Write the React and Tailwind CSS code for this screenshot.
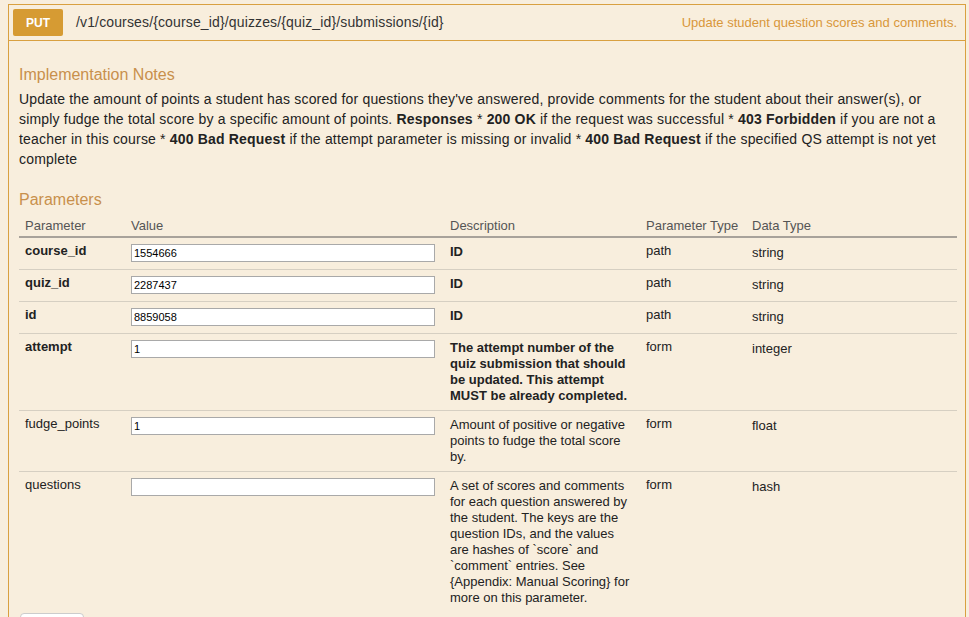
import React from 'react'

const rows = [
  { name: 'course_id', value: '1554666', desc: 'ID', bold: true, descBold: true, type: 'path', dtype: 'string' },
  { name: 'quiz_id', value: '2287437', desc: 'ID', bold: true, descBold: true, type: 'path', dtype: 'string' },
  { name: 'id', value: '8859058', desc: 'ID', bold: true, descBold: true, type: 'path', dtype: 'string' },
  { name: 'attempt', value: '1', desc: 'The attempt number of the quiz submission that should be updated. This attempt MUST be already completed.', bold: true, descBold: true, type: 'form', dtype: 'integer' },
  { name: 'fudge_points', value: '1', desc: 'Amount of positive or negative points to fudge the total score by.', type: 'form', dtype: 'float' },
  { name: 'questions', value: '', desc: 'A set of scores and comments for each question answered by the student. The keys are the question IDs, and the values are hashes of `score` and `comment` entries. See {Appendix: Manual Scoring} for more on this parameter.', type: 'form', dtype: 'hash' },
]

export default function App(){
  return (
    <div className="min-h-[617px] bg-[#f8eedd] pt-[4px] pl-[8px] pr-[3px] text-[#222]" style={{ fontFamily: '"Liberation Sans", Arial, sans-serif' }}>
      <div className="border border-[#d9a040]">
        {/* heading */}
        <div className="flex items-center h-[36px] pl-[4px] pr-[8px] border-b border-[#d9a040]">
          <span className="w-[50px] h-[27px] rounded-[2px] bg-[#d69b33] text-white text-[12px] font-bold flex items-center justify-center">PUT</span>
          <span className="ml-[13px] text-[14px] tracking-[0.14px] text-[#333]">/v1/courses/&#123;course_id&#125;/quizzes/&#123;quiz_id&#125;/submissions/&#123;id&#125;</span>
          <span className="ml-auto text-[13px] text-[#d9973a]">Update student question scores and comments.</span>
        </div>

        {/* content */}
        <div className="px-[10px] pt-[24px]">
          <h4 className="text-[16px] text-[#c8904c] leading-[20px]">Implementation Notes</h4>
          <p className="mt-[4px] text-[14px] leading-[20px] tracking-[0.18px] whitespace-nowrap text-[#222]">
            Update the amount of points a student has scored for questions they've answered, provide comments for the student about their answer(s), or<br />
            simply fudge the total score by a specific amount of points. <b>Responses</b> * <b>200 OK</b> if the request was successful * <b>403 Forbidden</b> if you are not a<br />
            teacher in this course * <b>400 Bad Request</b> if the attempt parameter is missing or invalid * <b>400 Bad Request</b> if the specified QS attempt is not yet<br />
            complete
          </p>

          <h4 className="mt-[21px] text-[16px] text-[#c8904c] leading-[20px]">Parameters</h4>
          <table className="mt-[8px] w-[938px] table-fixed border-collapse text-[13px]">
            <colgroup>
              <col className="w-[106px]" />
              <col className="w-[319px]" />
              <col className="w-[196px]" />
              <col className="w-[106px]" />
              <col />
            </colgroup>
            <thead>
              <tr className="border-b-2 border-[#a8a29a] text-[#555] text-left">
                <th className="font-normal px-[6px] pb-[2px] leading-[16px]">Parameter</th>
                <th className="font-normal px-[6px] pb-[2px] leading-[16px]">Value</th>
                <th className="font-normal px-[6px] pb-[2px] leading-[16px]">Description</th>
                <th className="font-normal px-[6px] pb-[2px] leading-[16px]">Parameter Type</th>
                <th className="font-normal px-[6px] pb-[2px] leading-[16px]">Data Type</th>
              </tr>
            </thead>
            <tbody>
              {rows.map((r, i) => (
                <tr key={r.name} className={i < rows.length - 1 ? 'border-b border-[#d6cfc2] align-top' : 'align-top'}>
                  <td className={'px-[6px] pt-[5px] pb-[6px] leading-[16px] ' + (r.bold ? 'font-bold' : '')}>{r.name}</td>
                  <td className="pl-[6px] pt-[6px] pb-[7px]">
                    <div className="w-[304px] h-[18px] bg-white border border-[#a9a9a9] text-[11px] leading-[16px] pl-[2px] text-black">{r.value}</div>
                  </td>
                  <td className={'px-[6px] pt-[6px] pb-[6px] leading-[16px] ' + (r.descBold ? 'font-bold' : '')}>{r.desc}</td>
                  <td className="px-[6px] pt-[5px] leading-[16px]">{r.type}</td>
                  <td className="px-[6px] pt-[7px] leading-[16px]">{r.dtype}</td>
                </tr>
              ))}
            </tbody>
          </table>
          <div className="mt-[1px] ml-[1px] w-[64px] h-[24px] bg-white border border-[#ccc] rounded-[4px]"></div>
        </div>
      </div>
    </div>
  )
}
